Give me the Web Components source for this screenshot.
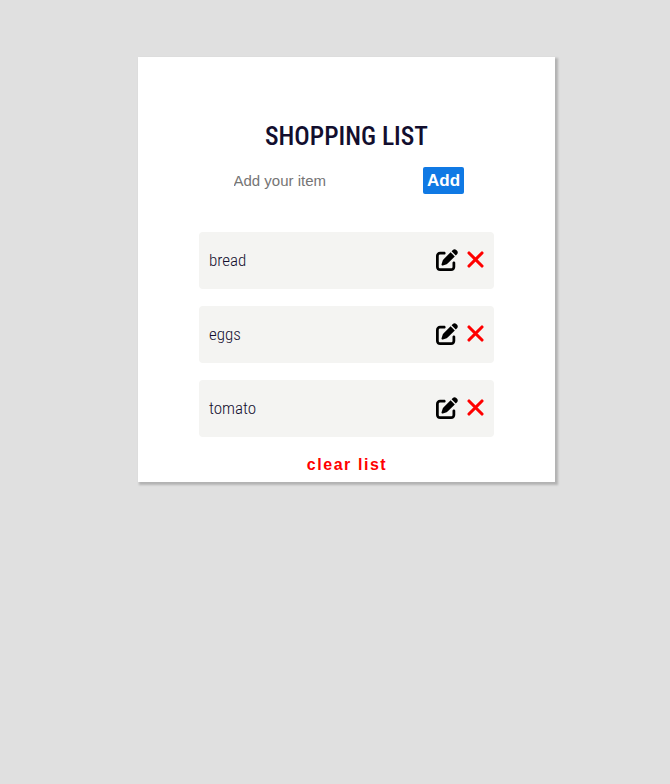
<!DOCTYPE html>
<html lang="en"><head><meta charset="utf-8"><title>Shopping List</title>
<style>html{background:#e0e0e0}body{margin:0;display:flow-root;min-height:100vh;font-family:"Roboto Condensed",Roboto,sans-serif;font-stretch:75%;color:#120e2e}</style></head>
<body>
<shopping-list>
<list-item>bread</list-item><list-item>eggs</list-item><list-item>tomato</list-item>
</shopping-list>
<script>
class ShoppingList extends HTMLElement{
constructor(){super();this.attachShadow({mode:'open'}).innerHTML=`<style>
:host{display:block;box-sizing:border-box;width:417px;height:425.8px;margin:56.5px 0 0 138px;padding:64.5px 61px 0;background:#fff;box-shadow:2px 2px 2px 1px rgba(0,0,0,.2)}
*{box-sizing:border-box}
h1{margin:0;height:30px;line-height:30px;font-size:25.6px;font-weight:500;text-align:center}
form{display:flex;justify-content:space-between;margin:15.5px 30px 0 34.5px;height:27px}
input{font:15px "Liberation Sans",sans-serif;border:0;padding:0;width:180px;background:transparent;outline:0}
input::placeholder{color:#757575}
button{font:bold 17px "Liberation Sans",sans-serif;border:0;padding:0}
.add{width:41px;padding-top:1px;background:#1079e4;color:#fff;border-radius:2px}
.items{display:grid;gap:17px;margin-top:38px}
.clear{display:block;margin:18px auto 0;height:20px;color:red;background:none;font-size:16px;letter-spacing:1.55px;white-space:nowrap;padding-left:1px}
</style><h1>SHOPPING LIST</h1>
<form><input placeholder="Add your item" aria-label="Item"><button class="add" type="button">Add</button></form>
<div class="items"><slot></slot></div><button class="clear">clear list</button>`}}
class ListItem extends HTMLElement{
constructor(){super();this.attachShadow({mode:'open'}).innerHTML=`<style>
:host{display:flex;align-items:center;box-sizing:border-box;height:57px;padding:0 10px;background:#f4f4f2;border-radius:4px;font-size:17px;font-weight:345}
.label{margin-right:auto}
svg{display:block;flex:none}
.edit{margin-right:9px;margin-bottom:1px}
.remove{margin-bottom:2px}
</style><span class="label"><slot></slot></span>
<svg class="edit" width="22" height="22" viewBox="0 0 512 512"><path d="M471.6 21.7c-21.9-21.9-57.3-21.9-79.2 0L362.3 51.7l97.9 97.9 30.1-30.1c21.9-21.9 21.9-57.3 0-79.2L471.6 21.7zm-299.2 220c-6.1 6.1-10.8 13.6-13.5 21.9l-29.6 88.8c-2.9 8.6-.6 18.1 5.8 24.6s15.9 8.7 24.6 5.8l88.8-29.6c8.2-2.7 15.7-7.4 21.9-13.5L437.7 172.3 339.7 74.3 172.4 241.7zM96 64C43 64 0 107 0 160V416c0 53 43 96 96 96H352c53 0 96-43 96-96V320c0-17.7-14.3-32-32-32s-32 14.3-32 32v96c0 17.7-14.3 32-32 32H96c-17.7 0-32-14.3-32-32V160c0-17.7 14.3-32 32-32h96c17.7 0 32-14.3 32-32s-14.3-32-32-32H96z"/></svg>
<svg class="remove" width="17" height="17" viewBox="0 0 17 17"><path d="M2 2 15 15M15 2 2 15" stroke="red" stroke-width="3.1" stroke-linecap="round"/></svg>`}}
customElements.define('list-item',ListItem);
customElements.define('shopping-list',ShoppingList);
</script></body></html>
